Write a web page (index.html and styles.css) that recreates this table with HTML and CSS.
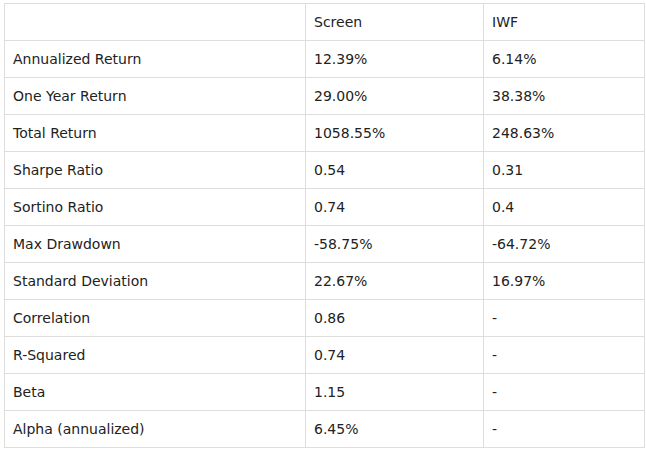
FILE: index.html
```html
<!DOCTYPE html>
<html>
<head>
<meta charset="utf-8">
<link rel="stylesheet" href="styles.css">
</head>
<body>
<div class="wrap">
<table class="stats">
<colgroup><col class="c1"><col class="c2"><col class="c3"></colgroup>
<thead>
<tr><th></th><th>Screen</th><th>IWF</th></tr>
</thead>
<tbody>
<tr><td>Annualized Return</td><td>12.39%</td><td>6.14%</td></tr>
<tr><td>One Year Return</td><td>29.00%</td><td>38.38%</td></tr>
<tr><td>Total Return</td><td>1058.55%</td><td>248.63%</td></tr>
<tr><td>Sharpe Ratio</td><td>0.54</td><td>0.31</td></tr>
<tr><td>Sortino Ratio</td><td>0.74</td><td>0.4</td></tr>
<tr><td>Max Drawdown</td><td>-58.75%</td><td>-64.72%</td></tr>
<tr><td>Standard Deviation</td><td>22.67%</td><td>16.97%</td></tr>
<tr><td>Correlation</td><td>0.86</td><td>-</td></tr>
<tr><td>R-Squared</td><td>0.74</td><td>-</td></tr>
<tr><td>Beta</td><td>1.15</td><td>-</td></tr>
<tr><td>Alpha (annualized)</td><td>6.45%</td><td>-</td></tr>
</tbody>
</table>
</div>
</body>
</html>
```
FILE: styles.css
```css
html, body {
  margin: 0;
  padding: 0;
  background: #fff;
}
.wrap {
  padding: 3px 0 0 4px;
}
.stats {
  border-collapse: collapse;
  table-layout: fixed;
  width: 640px;
  font-family: "DejaVu Sans", Verdana, sans-serif;
  font-size: 14px;
  line-height: 20px;
  color: #222;
}
.c1 { width: 301px; }
.c2 { width: 178px; }
.c3 { width: 161px; }
.stats th, .stats td {
  border: 1px solid #ddd;
  padding: 8px 8px;
  text-align: left;
  font-weight: normal;
  vertical-align: middle;
  white-space: nowrap;
}
.stats th {
  height: 20px;
}
```
